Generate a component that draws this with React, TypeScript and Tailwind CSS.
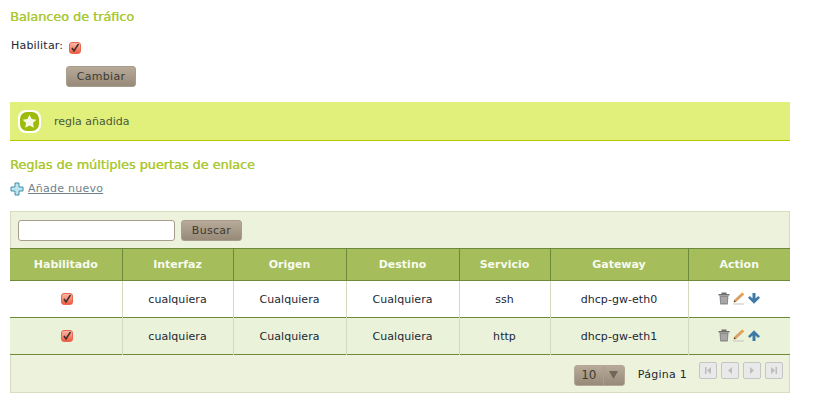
const columns = [
  { label: "Habilitado", width: "w-[112px]" },
  { label: "Interfaz", width: "w-[111px]" },
  { label: "Origen", width: "w-[113px]" },
  { label: "Destino", width: "w-[113px]" },
  { label: "Servicio", width: "w-[91px]" },
  { label: "Gateway", width: "w-[138px]" },
  { label: "Action", width: "w-[102px]" },
];

const rows = [
  { iface: "cualquiera", service: "ssh", gateway: "dhcp-gw-eth0", down: true },
  { iface: "cualquiera", service: "http", gateway: "dhcp-gw-eth1", down: false },
];

function RedCheck() {
  return (
    <span className="inline-flex h-3 w-3 items-center justify-center rounded-[3px] border border-[#e8694f] bg-gradient-to-b from-[#fbb7a6] to-[#ee5a3f]">
      <svg width="10" height="10" viewBox="0 0 10 10">
        <path d="M2 5 L4 8 L8.5 1" fill="none" stroke="#3a2f2c" strokeWidth="1.5" />
      </svg>
    </span>
  );
}

function Trash() {
  return (
    <svg width="12" height="13" viewBox="0 0 12 13">
      <path d="M0.5 2 H11.5 V3.6 H0.5 Z M3.5 0.6 H8.5 V2 H3.5 Z" fill="#6f6f6f" />
      <path d="M1.5 3.6 H10.5 L9.8 12.4 H2.2 Z" fill="#8c8c8c" />
      <path d="M4 5 V11 M6 5 V11 M8 5 V11" stroke="#c8c8c8" strokeWidth="0.9" />
    </svg>
  );
}

function Pencil() {
  return (
    <svg width="12" height="13" viewBox="0 0 12 13">
      <path d="M1 8 L8 1.5 L10 3.5 L3 10 L0.8 10.2 Z" fill="#d9a066" />
      <path d="M8 1.5 L9.2 0.4 L11.2 2.4 L10 3.5 Z" fill="#f5921e" />
      <path d="M1 8 L3 10 L0.8 10.2 Z" fill="#6b4a2a" />
      <path d="M0 12 H11" stroke="#c4c4bc" strokeWidth="1" />
    </svg>
  );
}

function Arrow({ down }: { down: boolean }) {
  return (
    <svg width="12" height="11" viewBox="0 0 12 11" className={down ? "" : "rotate-180"}>
      <path d="M4.5 0 H7.5 V5.5 L10.2 3 L12 4.8 L6 10.8 L0 4.8 L1.8 3 L4.5 5.5 Z" fill="#3f7aa6" />
    </svg>
  );
}

function PagerButton({ icon }: { icon: "first" | "prev" | "next" | "last" }) {
  return (
    <span className="flex h-[17px] w-[18px] items-center justify-center rounded-[2px] border border-[#c5c5c5] bg-[#e9e9e9]">
      <svg width="8" height="9" viewBox="0 0 8 9" fill="#bdbdbd">
        {icon === "first" && <path d="M1 1 H2.5 V8 H1 Z M7 1 V8 L3 4.5 Z" />}
        {icon === "prev" && <path d="M6 1 V8 L2 4.5 Z" />}
        {icon === "next" && <path d="M2 1 V8 L6 4.5 Z" />}
        {icon === "last" && <path d="M1 1 V8 L5 4.5 Z M5.5 1 H7 V8 H5.5 Z" />}
      </svg>
    </span>
  );
}

const brownButton =
  "rounded-[3px] border border-[#a89c8c] bg-gradient-to-b from-[#b7aa98] to-[#978a78] text-[#403a33]";

const heading =
  "text-[12.8px] leading-[17px] font-normal text-[#acc934] [text-shadow:0.4px_0_0_#acc934]";

const cell = "border-l border-[#d5d9bd] pt-[2px] text-center tracking-[0.05px]";

export default function App() {
  return (
    <div className="h-[420px] w-[813px] overflow-hidden bg-white font-['DejaVu_Sans',sans-serif] text-[11px] text-[#1c2733]">
      <div className="w-[790px] pl-[10px]">
        <h2 className={`pt-[8px] ${heading}`}>Balanceo de tráfico</h2>

        <div className="mt-[14px] flex h-[15px] items-center pl-[1px]">
          <span className="tracking-[0.2px]">Habilitar:</span>
          <span className="ml-[6px] flex pt-[2px]">
            <RedCheck />
          </span>
        </div>

        <div className="mt-[12px] pl-[56px]">
          <button className={`${brownButton} h-[21px] w-[70px] pt-[2px] text-[11px] tracking-[0.3px]`}>
            Cambiar
          </button>
        </div>

        <div className="mt-[15px] flex h-[39px] items-center border-b border-[#b5c800] bg-[#e0f07a] pl-[8px]">
          <span className="flex h-[23px] w-[23px] items-center justify-center rounded-[8px] bg-white">
            <span className="flex h-[19px] w-[19px] items-center justify-center rounded-[7px] bg-[#9dbb0a]">
              <svg width="15" height="15" viewBox="0 0 24 24" fill="#f6f8e6">
                <path d="M12 1 L15.4 8 L23 9 L17.5 14.4 L18.9 22 L12 18.3 L5.1 22 L6.5 14.4 L1 9 L8.6 8 Z" />
              </svg>
            </span>
          </span>
          <span className="ml-[13px] pt-[2px] text-[#4a5a3c]">regla añadida</span>
        </div>

        <h2 className={`mt-[15px] ${heading}`}>Reglas de múltiples puertas de enlace</h2>

        <div className="mt-[9px] flex h-[15px] items-center">
          <svg width="14" height="14" viewBox="0 0 14 14" className="-mt-[2px]">
            <path
              d="M5 1 H9 V5 H13 V9 H9 V13 H5 V9 H1 V5 H5 Z"
              fill="#bfe6ee"
              stroke="#3f8fa8"
              strokeWidth="1"
            />
          </svg>
          <span className="ml-[4px] tracking-[0.25px] text-[#6f7f8c] underline">Añade nuevo</span>
        </div>

        <div className="mt-[14px] w-[780px] border border-[#d8dcc0] bg-[#edf2dc]">
          <div className="flex h-[36px] items-center pl-[7px]">
            <input
              readOnly
              className="h-[21px] w-[157px] rounded-[3px] border border-[#a89c8c] bg-white"
            />
            <button className={`${brownButton} ml-[6px] h-[21px] w-[61px] pt-[2px] tracking-[0.3px]`}>
              Buscar
            </button>
          </div>

          <table className="-mx-[1px] w-[780px] table-fixed border-collapse">
            <thead>
              <tr className="h-[32px] border-y border-[#6d8a3a] bg-[#a5bd5b]">
                {columns.map((col, i) => (
                  <th
                    key={col.label}
                    className={`${col.width} ${i > 0 ? "border-l border-[#6d8a3a]" : ""} pt-[2px] font-bold text-[#f7fbef]`}
                  >
                    {col.label}
                  </th>
                ))}
              </tr>
            </thead>
            <tbody>
              {rows.map((row, i) => (
                <tr
                  key={row.gateway}
                  className={`h-[37px] border-b border-[#6d8a3a] ${i === 0 ? "bg-white" : "bg-[#ebf2da]"}`}
                >
                  <td className="text-center">
                    <span className="flex justify-center pb-[1px] pl-[2px]">
                      <RedCheck />
                    </span>
                  </td>
                  <td className={cell}>{row.iface}</td>
                  <td className={cell}>Cualquiera</td>
                  <td className={cell}>Cualquiera</td>
                  <td className={cell}>{row.service}</td>
                  <td className={cell}>{row.gateway}</td>
                  <td className="border-l border-[#d5d9bd]">
                    <span className="flex items-center justify-center gap-[3px] pb-[2px]">
                      <Trash />
                      <Pencil />
                      <Arrow down={row.down} />
                    </span>
                  </td>
                </tr>
              ))}
            </tbody>
          </table>

          <div className="flex h-[37px] items-center justify-end pr-[6px]">
            <span className={`${brownButton} mt-[3px] flex h-[21px] w-[51px] items-center border-[#b3a796]`}>
              <span className="w-[28px] text-center text-[12px]">10</span>
              <span className="flex h-full flex-1 items-center justify-center border-l border-[#a89c8c]">
                <svg width="9" height="8" viewBox="0 0 9 8" fill="#6f675c">
                  <path d="M0 0 H9 L4.5 8 Z" />
                </svg>
              </span>
            </span>
            <span className="mt-[3px] mr-[12px] ml-[13px] tracking-[0.25px]">Página 1</span>
            <span className="flex items-center gap-[4px] pb-[6px]">
              <PagerButton icon="first" />
              <PagerButton icon="prev" />
              <PagerButton icon="next" />
              <PagerButton icon="last" />
            </span>
          </div>
        </div>
      </div>
    </div>
  );
}
